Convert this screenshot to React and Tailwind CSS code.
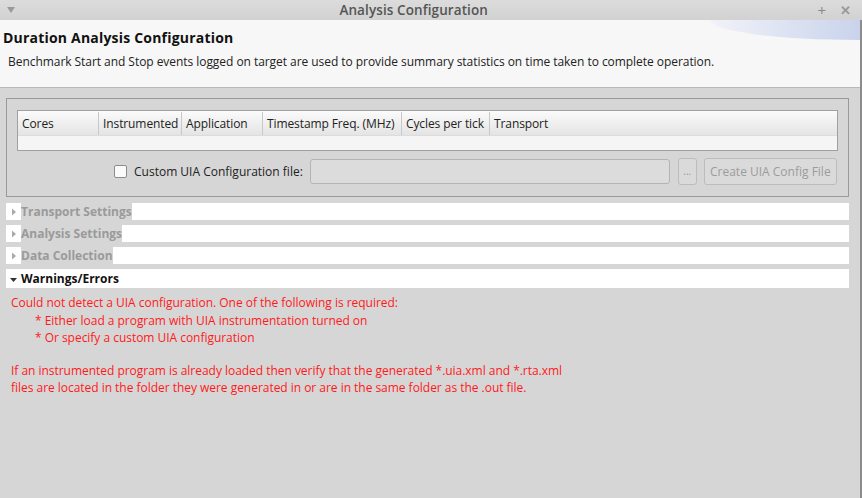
import { useState } from "react";

const columns = [
  { label: "Cores", w: "w-[81px]" },
  { label: "Instrumented", w: "w-[83px]" },
  { label: "Application", w: "w-[81px]" },
  { label: "Timestamp Freq. (MHz)", w: "w-[139px]" },
  { label: "Cycles per tick", w: "w-[88px]" },
  { label: "Transport", w: "flex-1" },
];

const sections = [
  { label: "Transport Settings", open: false },
  { label: "Analysis Settings", open: false },
  { label: "Data Collection", open: false },
  { label: "Warnings/Errors", open: true },
];

function Twisty({ open, dim }) {
  return (
    <svg width="14" height="14" viewBox="0 0 14 14" className="shrink-0">
      {open ? (
        <path d="M3 6 L10 6 L6.5 10 Z" fill="#333" />
      ) : (
        <path d="M5 3.5 L9 7 L5 10.5 Z" fill={dim ? "#aaa" : "#333"} />
      )}
    </svg>
  );
}

export default function App() {
  const [custom, setCustom] = useState(false);

  return (
    <div className="relative flex h-[498px] w-[862px] flex-col overflow-hidden bg-[#d6d6d6] font-['Open_Sans',sans-serif] text-[12px] text-[#222]">
      {/* window title bar */}
      <div className="flex h-[20px] items-center bg-gradient-to-b from-[#dcdcdc] to-[#d2d2d2] px-[6px]">
        <svg width="10" height="8" viewBox="0 0 10 8">
          <path d="M1 1 L9 1 L5 7 Z" fill="#9a9a9a" />
        </svg>
        <div className="flex-1 pr-[6px] text-center text-[13.5px] font-semibold tracking-[0.1px] text-[#555]">
          Analysis Configuration
        </div>
        <span className="mr-[14px] text-[15px] leading-none text-[#8a8a8a]">+</span>
        <span className="mr-[5px] text-[13px] font-bold leading-none text-[#9a9a9a]">✕</span>
      </div>

      <div className="flex flex-1 flex-col border-r-2 border-[#8c8c8c]">
        {/* header */}
        <div className="relative h-[68px] border-b border-[#b8b8b8] bg-[#f7f7f7]">
          <div className="absolute right-0 top-0 h-[20px] w-[150px] rounded-bl-[100%_100%] bg-gradient-to-r from-[#f2f3f8] to-[#c9d3ec]" />
          <div className="relative px-[3px] pt-[7px] text-[14px] font-bold tracking-[0.2px] text-[#111]">
            Duration Analysis Configuration
          </div>
          <div className="relative px-[8px] pt-[5px] text-[12px] tracking-[-0.05px] text-[#222]">
            Benchmark Start and Stop events logged on target are used to provide summary statistics on time taken to complete operation.
          </div>
        </div>

        {/* group box */}
        <div className="mx-[6px] mt-[10px] w-[843px] border border-[#9a9a9a] px-[10px] pb-[12px] pt-[11px]">
          <div className="border border-[#a0a0a0] bg-[#f5f5f5]">
            <div className="flex h-[24px] bg-gradient-to-b from-[#fbfbfb] to-[#e4e4e4] pt-[1px]">
              {columns.map((c, i) => (
                <div
                  key={c.label}
                  className={`${c.w} flex items-center overflow-hidden whitespace-nowrap px-[4px] text-[12px] tracking-[-0.1px] text-[#222] ${i < columns.length - 1 ? "border-r border-[#c8c8c8]" : ""}`}
                >
                  {c.label}
                </div>
              ))}
            </div>
            <div className="h-[15px] border-t border-[#dcdcdc]" />
          </div>

          <div className="mt-[8px] flex h-[25px] items-center">
            <button
              type="button"
              onClick={() => setCustom((v) => !v)}
              className="ml-[97px] h-[13px] w-[13px] rounded-[2px] border border-[#8c8c8c] bg-[#fafafa]"
              aria-label="Custom UIA Configuration file"
            >
              {custom && <span className="block text-[10px] leading-none">✓</span>}
            </button>
            <span className="ml-[7px] text-[12px] text-[#222]">Custom UIA Configuration file:</span>
            <div className="ml-[7px] h-[25px] w-[360px] rounded-[3px] border border-[#b4b4b4] bg-[#dcdcdc]" />
            <div className="ml-[8px] flex h-[27px] w-[19px] items-center justify-center rounded-[3px] border border-[#bcbcbc] bg-[#dadada] text-[10px] text-[#999]">
              ...
            </div>
            <div className="ml-[7px] flex h-[27px] w-[133px] items-center justify-center rounded-[3px] border border-[#bcbcbc] bg-[#dadada] text-[12px] text-[#9c9c9c]">
              Create UIA Config File
            </div>
          </div>
        </div>

        {/* expandable sections */}
        <div className="mx-[6px] mt-[6px] flex w-[843px] flex-col gap-[5px]">
          {sections.map((s) => (
            <div
              key={s.label}
              className={`flex items-center bg-white ${s.open ? "h-[19px]" : "h-[17px]"}`}
            >
              <div className="flex w-[15px] justify-center">
                <Twisty open={s.open} dim={!s.open} />
              </div>
              <span
                className={`text-[12px] font-bold leading-[17px] ${s.open ? "text-[#111]" : "bg-[#d6d6d6] text-[#9a9a9a]"}`}
              >
                {s.label}
              </span>
            </div>
          ))}
        </div>

        {/* warnings */}
        <div className="mt-[6px] px-[11px] text-[12px] leading-[17.5px] tracking-[-0.03px] text-[#ff1a1a]">
          <div>Could not detect a UIA configuration. One of the following is required:</div>
          <div className="pl-[24px]">* Either load a program with UIA instrumentation turned on</div>
          <div className="pl-[24px]">* Or specify a custom UIA configuration</div>
          <div className="h-[15px]" />
          <div>If an instrumented program is already loaded then verify that the generated *.uia.xml and *.rta.xml</div>
          <div>files are located in the folder they were generated in or are in the same folder as the .out file.</div>
        </div>
      </div>
    </div>
  );
}
